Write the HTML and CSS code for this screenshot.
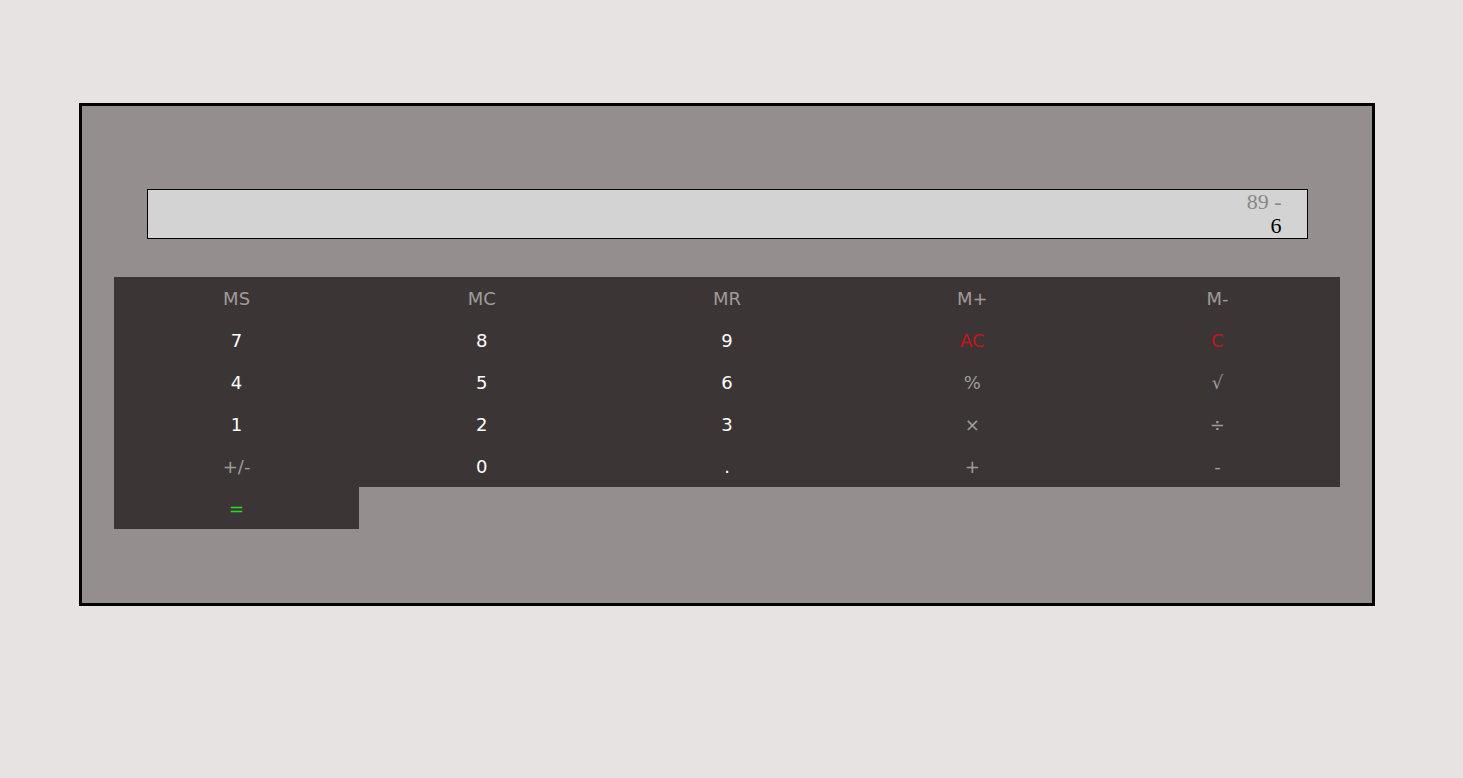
FILE: index.html
```html
<!DOCTYPE html>
<html>
<head>
<meta charset="utf-8">
<link rel="stylesheet" href="styles.css">
</head>
<body>
<div class="calc">
  <div class="display">
    <div class="prev">89 -</div>
    <div class="cur">6</div>
  </div>
  <div class="keys">
    <button class="key mem">MS</button>
    <button class="key mem">MC</button>
    <button class="key mem">MR</button>
    <button class="key mem">M+</button>
    <button class="key mem">M-</button>
    <button class="key num">7</button>
    <button class="key num">8</button>
    <button class="key num">9</button>
    <button class="key clear">AC</button>
    <button class="key clear">C</button>
    <button class="key num">4</button>
    <button class="key num">5</button>
    <button class="key num">6</button>
    <button class="key op">%</button>
    <button class="key op">√</button>
    <button class="key num">1</button>
    <button class="key num">2</button>
    <button class="key num">3</button>
    <button class="key op">×</button>
    <button class="key op">÷</button>
    <button class="key op">+/-</button>
    <button class="key num">0</button>
    <button class="key num">.</button>
    <button class="key op">+</button>
    <button class="key op">-</button>
    <button class="key eq">=</button>
  </div>
</div>
</body>
</html>
```
FILE: styles.css
```css
html, body {
  margin: 0;
  padding: 0;
  background: #e6e3e2;
}
body {
  padding: 103px 0 0 79px;
}
.calc {
  width: 1290px;
  height: 414px;
  border: 3px solid #000;
  background: #948f8e;
  display: flex;
  flex-direction: column;
  align-items: center;
  padding-top: 83px;
  box-sizing: content-box;
}
.display {
  width: 1161px;
  height: 50px;
  box-sizing: border-box;
  border: 1px solid #000;
  background: #d3d3d3;
  text-align: right;
  padding-right: 25px;
  font-family: "Liberation Serif", serif;
  font-size: 22px;
  line-height: 24px;
}
.prev {
  color: #888;
}
.cur {
  color: #000;
}
.keys {
  margin-top: 38px;
  width: 1226px;
  display: grid;
  grid-template-columns: repeat(5, 1fr);
  grid-auto-rows: 42px;
}
.key {
  background: #3c3536;
  border: none;
  margin: 0;
  padding: 0;
  font-family: "DejaVu Sans", sans-serif;
  font-size: 18px;
  color: #a09b9a;
}
.key.num { color: #ffffff; }
.key.clear { color: #c0161c; }
.key.eq { color: #22dd22; }
```
